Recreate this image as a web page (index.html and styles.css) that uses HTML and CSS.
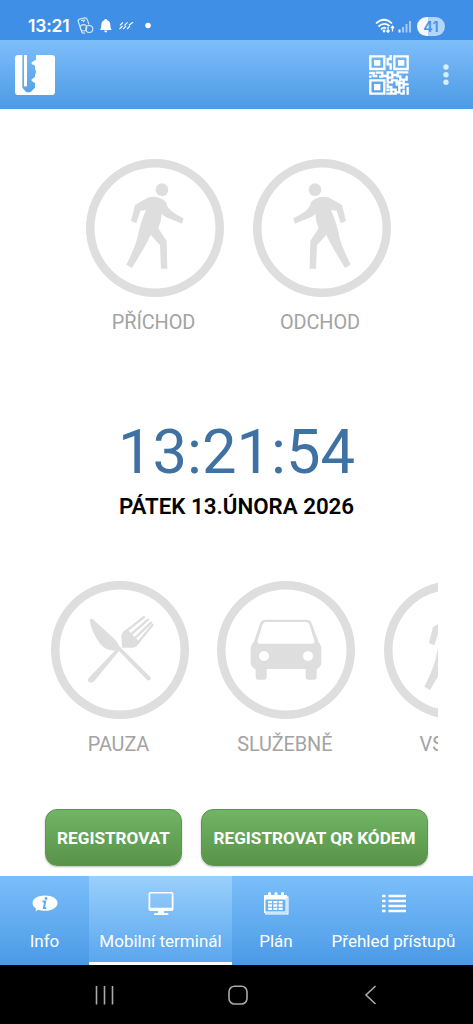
FILE: index.html
```html
<!DOCTYPE html>
<html lang="cs">
<head>
<meta charset="utf-8">
<title>Mobilní terminál</title>
<link rel="stylesheet" href="styles.css">
</head>
<body>
<svg class="defs" width="0" height="0" aria-hidden="true">
  <symbol id="walker" viewBox="20 27 414 414">
    <circle cx="248" cy="119" r="19"/>
    <path d="M205 143Q228 137 246 146Q263 154 262 166Q270 185 313 205L308 221L276 208Q254 200 247 191Q246 215 237 235L262 273L264 356H245L242 286L214 254Q204 277 192 297L158 354L141 344Q166 294 174 265Q181 223 200 180L183 182L171 220L155 213L167 165Z"/>
  </symbol>
</svg>
<div class="phone">
  <div class="status">
    <span class="status-time">13:21</span>
    <svg class="status-icons" viewBox="0 0 76 18" fill="none" stroke="#fff">
      <g stroke-width="1.1" opacity=".8"><path d="M5 15.500L1.200 4.500Q.800 2.500 3 2L8 .9Q9.700.8 10.200 2.400L12 7.500M5 15.500Q6 16.500 8 16M4 3.500L6 3.200L6.500 4.500L8.200 2.500"/><circle cx="6.500" cy="10.800" r="3.200"/><circle cx="12.300" cy="12" r="3.500"/></g>
      <path fill="#fff" stroke="none" d="M28.800 2q1.500 0 1.500 1.300q3 1.200 3 4.700q0 4 1.400 5H23q1.300-1 1.300-5q0-3.500 3-4.700Q27.300 2 28.800 2ZM27 13.600h3.500q-.5 2-1.700 2T27 13.600Z"/>
      <path stroke-width="1.100" d="M43 8.300l3-3M47.500 8.300l3-3M52 8.300l4-3M42.500 12l3-3M46 12l3-3M50 12l3-3"/>
      <circle cx="71" cy="8.500" r="2.800" fill="#fff" stroke="none"/>
    </svg>
    <svg class="signal" viewBox="0 0 38 18" fill="none" stroke="#fff">
      <g stroke-width="1.700"><path d="M1 6.500Q9-1 17 6.500M3.500 9.500Q9 4.500 14.500 9M6 12.300Q9 9.500 11 11.500"/></g>
      <circle cx="9" cy="14" r="1.400" fill="#fff" stroke="none"/>
      <path stroke-width="1.300" d="M13 10v5M11.500 13.500l1.500 1.700l1.500-1.700M17.500 14.500v-5M16 11l1.500-1.700L19 11"/>
      <g stroke-width="1.900"><path d="M24.500 15.500v-3"/><path opacity=".55" d="M28 15.500V10M31.500 15.500V7M35 15.500V4"/></g>
    </svg>
    <span class="battery">41</span>
  </div>

  <header class="header">
    <svg class="logo" viewBox="0 0 120 120">
      <path fill="#fff" fill-rule="evenodd" d="M10 0H110Q120 0 120 10V110Q120 120 110 120H10Q0 120 0 110V10Q0 0 10 0ZM22 0V98L34 112H46L60 98V84L50 78V73L60 66V59Q66 51 60 43V32L50 27V22L63 14V0Z"/>
      <path fill="#fff" d="M27 0H36V94H27Z"/>
    </svg>
    <svg class="qr" viewBox="0 0 120 120" fill="none" stroke="#fff" stroke-width="7">
      <path d="M4 4H46V42H4ZM76 4H116V42H76ZM4 76H46V116H4Z"/>
      <path fill="#fff" stroke="none" d="M15 15H34V32H15ZM87 15H106V32H87ZM15 87H34V106H15Z"/>
      <path d="M65 0V12H56V28H65V44M0 54H14V63H25M20 53H40V63H56V52H70V60H86V52H118M0 65H8M30 65H42M70 57V68H56V82H69V76H83V92M82 64H94V74H113V62M56 86V96H67V116M52 116H80V104H70M80 84H104V74M91 76V112H82M91 98H104V88H119M104 104V116H94M116 96V119M52 105H62"/>
    </svg>
    <svg class="more" viewBox="0 0 6 22" fill="#d9ecfc"><circle cx="3" cy="3" r="2.700"/><circle cx="3" cy="10.700" r="2.700"/><circle cx="3" cy="18.300" r="2.700"/></svg>
  </header>

  <main class="main">
    <div class="row row-top">
      <div class="action"><div class="ring"><svg><use href="#walker"/></svg></div><span class="label">PŘÍCHOD</span></div>
      <div class="action"><div class="ring mirrored"><svg><use href="#walker"/></svg></div><span class="label">ODCHOD</span></div>
    </div>
    <div class="clock">13:21:54</div>
    <div class="date">PÁTEK 13.ÚNORA 2026</div>
    <div class="row row-bottom">
      <div class="action"><div class="ring">
        <svg viewBox="33 33 414 414">
          <path d="M149 148Q155 144 162 151L220 204Q234 218 238 229L330 320Q334 325 331 330Q326 333 321 329L237 243L163 333Q155 342 147 336Q141 331 147 323L226 241Q200 244 181 222Q152 184 149 148Z"/>
          <path d="M246 233L244 197Q245 190 251 184L260 177L300 217L290 228Q285 233 278 233Z"/>
          <path class="tines" d="M253 188L312 141M266 199L324 149M279 210L333 158M293 219L338 164"/>
        </svg></div><span class="label">PAUZA</span></div>
      <div class="action"><div class="ring">
        <svg viewBox="22 33 414 414">
          <path fill-rule="evenodd" d="M168 149H290Q302 149 306 160L327 217Q335 225 335 240V276Q335 292 321 298V322Q321 329 314 329H295Q288 329 288 322V297H171V322Q171 329 164 329H145Q138 329 138 322V298Q123 292 123 276V240Q123 225 132 217L151 161Q155 149 168 149ZM170 156Q161 156 158 166L144 212Q142 221 150 221H308Q316 221 314 212L300 166Q297 156 288 156ZM163 243a15 15 0 1 0 .1 0ZM295 243a15 15 0 1 0 .1 0Z"/>
        </svg></div><span class="label">SLUŽEBNĚ</span></div>
      <div class="action"><div class="ring"><svg><use href="#walker"/></svg></div><span class="label label-cut">VS</span></div>
    </div>
    <div class="buttons">
      <button class="btn btn-short">REGISTROVAT</button>
      <button class="btn btn-long">REGISTROVAT QR KÓDEM</button>
    </div>
  </main>

  <nav class="tabs">
    <a class="tab">
      <svg viewBox="0 0 26 26"><path fill="#fff" d="M13 4.500C20 4.500 25.500 7.500 25.500 12S20 19.800 13 19.800Q9 19.800 6 18.700L3.500 20.500L4 17.500Q.5 15.300.5 12C.5 7.500 6 4.500 13 4.500Z"/><path d="M10.500 10.500H13.300L11.800 17H14.200" fill="none" stroke="#62a9ee" stroke-width="1.900"/><circle cx="14" cy="7.500" r="1.400" fill="#62a9ee"/></svg>
      <span>Info</span></a>
    <a class="tab active">
      <svg viewBox="0 0 26 26"><path fill="#fff" fill-rule="evenodd" d="M2.500 1H23.500Q25.500 1 25.500 3V18Q25.500 20 23.500 20H16V22H19.500Q20.500 22 20.500 24H6Q6 22 7 22H10V20H2.500Q.5 20 .5 18V3Q.5 1 2.500 1ZM2.300 2.600V16.800H23.700V2.600Z"/></svg>
      <span>Mobilní terminál</span></a>
    <a class="tab">
      <svg viewBox="0 0 26 26" fill="none"><path fill="#fff" fill-rule="evenodd" d="M1 4H5V2Q6.500 0 8 2V4H11.500V2Q13 0 14.500 2V4H18V2Q19.500 0 21 2V4H24V5.500H25.500V23.500H2V22H1ZM2.500 8.500V20.500H22.500V8.500Z"/><path stroke="#fff" stroke-width="2.300" stroke-dasharray="4 1.300" d="M5 11.200H20M5 14.500H20M5 17.800H20"/><path stroke="#65adef" stroke-width=".6" d="M2.500 22H24V7"/></svg>
      <span>Plán</span></a>
    <a class="tab">
      <svg viewBox="0 0 26 26" stroke="#fff" stroke-width="2.300"><path d="M1 5H4.500M7.500 5H25M1 10H4.500M7.500 10H25M1 15H4.500M7.500 15H25M1 20H4.500M7.500 20H25"/></svg>
      <span>Přehled přístupů</span></a>
  </nav>

  <div class="system-nav">
    <svg viewBox="0 0 20 20"><path d="M1.500 1V19.500M9.500 1V19.500M17.500 1V19.500"/></svg>
    <svg viewBox="0 0 20 20"><rect x="1" y="1.200" width="18" height="17.800" rx="5.500"/></svg>
    <svg viewBox="0 0 20 20"><path d="M14.500 1L5 10L14.500 19"/></svg>
  </div>
</div>
</body>
</html>
```
FILE: styles.css
```css
* { box-sizing: border-box; }
body {
  margin: 0;
  background: #fff;
  font-family: Roboto, "Liberation Sans", sans-serif;
}
.defs { display: block; height: 0; }
.phone {
  width: 473px;
  height: 1024px;
  display: flex;
  flex-direction: column;
  overflow: hidden;
}
.status {
  height: 40px;
  background: #408fe7;
  display: flex;
  align-items: center;
  padding: 12px 28px 0 28px;
  color: #fff;
}
.status-time {
  width: 49px;
  font: 600 17.500px/20px Inter, sans-serif;
  letter-spacing: -.2px;
}
.status-icons { width: 76px; height: 18px; }
.signal { width: 38px; height: 18px; margin-left: auto; margin-right: 4px; }
.battery {
  width: 28px;
  height: 19px;
  border-radius: 10px;
  background: linear-gradient(90deg, #f4faff 41%, #b5d6fa 41%);
  color: #4993e4;
  font: 600 14.500px/19px Inter, sans-serif;
  text-align: center;
}
.header {
  height: 69px;
  background: linear-gradient(#7dbefa, #4d9ae5);
  display: flex;
  align-items: center;
  padding: 0 24px 0 15px;
}
.logo { width: 40px; height: 40px; }
.qr { width: 40px; height: 40px; margin-left: auto; margin-right: 34px; }
.more { width: 6px; height: 22px; }
.main { height: 767px; padding-top: 50px; }
.row { display: flex; gap: 28.500px; }
.row-top { margin-left: 86px; height: 263px; }
.row-bottom { margin: 63px 35px 0 51px; height: 180px; gap: 28.300px; overflow: hidden; }
.action { flex: 0 0 138px; display: flex; flex-direction: column; align-items: center; }
.ring {
  width: 138px;
  height: 138px;
  border-radius: 50%;
  box-shadow: inset 0 0 0 8.500px #dedede;
}
.ring svg { display: block; width: 138px; height: 138px; fill: #dedede; }
.ring .tines { fill: none; stroke: #dedede; stroke-width: 7; stroke-linecap: round; }
.mirrored { transform: scaleX(-1); }
.label {
  margin-top: 14px;
  padding-right: 3px;
  color: #a3a3a3;
  font-size: 19.900px;
  line-height: 24px;
  letter-spacing: -.1px;
}
.label-cut { align-self: flex-start; margin-left: 36px; padding: 0; }
.clock {
  text-align: center;
  color: #3f72a2;
  font-size: 61.500px;
  line-height: 60px;
}
.date {
  margin-top: 12px;
  text-align: center;
  color: #000;
  font-size: 22.300px;
  font-weight: 600;
  line-height: 24px;
}
.buttons { display: flex; gap: 19px; padding: 48px 0 0 45px; }
.btn {
  height: 57px;
  padding: 0;
  border: 1px solid #5c9451;
  border-radius: 12px;
  background: linear-gradient(#70b565, #589349);
  box-shadow: 0 1px 2px #0004;
  color: #fff;
  font: 700 17.150px/20px Roboto, sans-serif;
}
.btn-short { width: 137px; }
.btn-long { width: 227px; }
.tabs {
  height: 89px;
  display: grid;
  grid-template-columns: 89px 143px 88px 147px;
  background: linear-gradient(#7bbefa, #4b9ae6);
}
.tab {
  display: flex;
  flex-direction: column;
  align-items: center;
  padding-top: 15px;
  color: #fff;
  font-size: 17px;
  line-height: 22px;
  white-space: nowrap;
}
.tab svg { width: 26px; height: 26px; margin-bottom: 13px; flex: none; }
.active {
  background: linear-gradient(#9ad0fb, #5aa6ee);
  border-bottom: 3px solid #fff;
}
.system-nav {
  height: 59px;
  background: #000;
  display: flex;
  align-items: center;
  gap: 113px;
  padding: 0 0 0 95px;
}
.system-nav svg { width: 20px; height: 20px; fill: none; stroke: #aaa; stroke-width: 1.600; }
```
